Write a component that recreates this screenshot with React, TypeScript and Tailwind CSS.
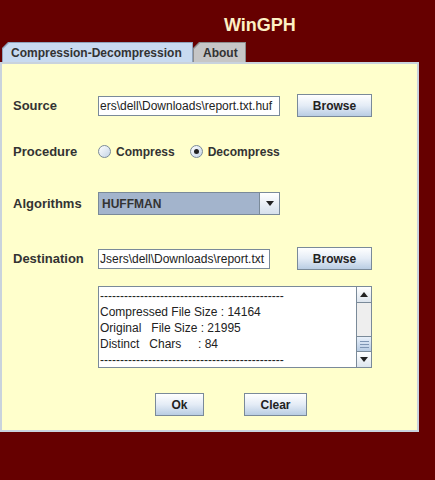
import React from 'react';

const FONT = "font-['Liberation_Sans',Arial,sans-serif]";

const MetalButton: React.FC<{ label: string; className?: string }> = ({ label, className = '' }) => (
    <button
        className={`h-[23px] border border-[#7a8a99] bg-gradient-to-b from-[#ffffff] via-[#e4ecf6] to-[#b9cde3] text-[12px] font-bold text-[#222] ${className}`}
    >
        {label}
    </button>
);

const Radio: React.FC<{ checked?: boolean; label: string }> = ({ checked, label }) => (
    <label className="flex items-center gap-[5px]">
        <span className="w-[13px] h-[13px] rounded-full border border-[#7a8a99] bg-gradient-to-br from-[#ffffff] to-[#c4d4e6] flex items-center justify-center">
            {checked && <span className="w-[5px] h-[5px] rounded-full bg-[#222]" />}
        </span>
        <span className="text-[12px] font-bold text-[#333] whitespace-nowrap">{label}</span>
    </label>
);

const Label: React.FC<{ children: React.ReactNode }> = ({ children }) => (
    <span className="w-[85px] text-[13px] font-bold text-[#333] whitespace-nowrap">{children}</span>
);

const Arrow: React.FC<{ up?: boolean }> = ({ up }) => (
    <svg width="8" height="5" viewBox="0 0 8 5">
        {up ? <polygon points="0,5 8,5 4,0" fill="#222" /> : <polygon points="0,0 8,0 4,5" fill="#222" />}
    </svg>
);

const DASHES = '----------------------------------------------';

export default function App() {
    return (
        <div className={`w-[435px] h-[480px] bg-[#660000] ${FONT} overflow-hidden`}>
            {/* Title */}
            <div className="h-[42px] pl-[224px] pt-[12px]">
                <span className="text-[18px] font-bold text-[#fdf0c4]">WinGPH</span>
            </div>

            {/* Tabs */}
            <div className="flex h-[20px] pl-[2px] items-end">
                <div className="w-[191px] h-[20px] bg-[#8ea2bb] [clip-path:polygon(6px_0,100%_0,100%_100%,0_100%,0_6px)] pt-[1px] pl-[1px] pr-[1px]">
                    <div className="h-full bg-[#c8daf0] [clip-path:polygon(6px_0,100%_0,100%_100%,0_100%,0_6px)] flex items-center pl-[8px] text-[12px] font-bold text-[#333] whitespace-nowrap">
                        Compression-Decompression
                    </div>
                </div>
                <div className="w-[53px] h-[20px] bg-[#8c8c8c] [clip-path:polygon(6px_0,100%_0,100%_100%,0_100%,0_6px)] pt-[1px] pl-[1px] pr-[1px]">
                    <div className="h-full bg-[#c6c6c6] [clip-path:polygon(6px_0,100%_0,100%_100%,0_100%,0_6px)] flex items-center pl-[9px] text-[12px] font-bold text-[#333]">
                        About
                    </div>
                </div>
            </div>

            {/* Panel */}
            <div className="w-[419px] h-[370px] bg-[#ffffcc] border-2 border-[#c9d3dd] flex flex-col">
                {/* Source */}
                <div className="flex items-center h-[23px] mt-[30px] pl-[11px]">
                    <Label>Source</Label>
                    <div className="w-[182px] h-[20px] bg-white border border-[#7a8a99] overflow-hidden whitespace-nowrap text-[12px] text-[#222] leading-[18px] pl-[1px]">
                        ers\dell\Downloads\report.txt.huf
                    </div>
                    <MetalButton label="Browse" className="w-[75px] ml-[17px]" />
                </div>

                {/* Procedure */}
                <div className="flex items-center h-[23px] mt-[23px] pl-[11px]">
                    <Label>Procedure</Label>
                    <div className="flex items-center gap-[15px]">
                        <Radio label="Compress" />
                        <Radio label="Decompress" checked />
                    </div>
                </div>

                {/* Algorithms */}
                <div className="flex items-center h-[23px] mt-[29px] pl-[11px]">
                    <Label>Algorithms</Label>
                    <div className="w-[182px] h-[23px] border border-[#7a8a99] flex">
                        <div className="flex-1 bg-[#a3b4cc] flex items-center pl-[3px] text-[12px] font-bold text-[#333]">HUFFMAN</div>
                        <div className="w-[20px] border-l border-[#7a8a99] bg-gradient-to-b from-[#ffffff] to-[#d6e0ec] flex items-center justify-center">
                            <Arrow />
                        </div>
                    </div>
                </div>

                {/* Destination */}
                <div className="flex items-center h-[23px] mt-[32px] pl-[11px]">
                    <Label>Destination</Label>
                    <div className="w-[172px] h-[20px] bg-white border border-[#7a8a99] overflow-hidden whitespace-nowrap text-[12px] text-[#222] leading-[18px] pl-[1px]">
                        Jsers\dell\Downloads\report.txt
                    </div>
                    <MetalButton label="Browse" className="w-[75px] ml-[27px]" />
                </div>

                {/* Output */}
                <div className="flex mt-[16px] pl-[96px]">
                    <div className="w-[274px] h-[82px] bg-white border border-[#7a8a99] flex">
                        <div className="flex-1 overflow-hidden whitespace-pre text-[12px] leading-[16px] text-[#222] pl-[1px]">
                            <div className="h-[17px] pt-[1px]">{DASHES}</div>
                            <div>Compressed File Size : 14164</div>
                            <div>Original   File Size : 21995</div>
                            <div>Distinct   Chars     : 84</div>
                            <div>{DASHES}</div>
                        </div>
                        <div className="w-[15px] border-l border-[#7a8a99] bg-[#eeeeee] flex flex-col">
                            <div className="h-[16px] border-b border-[#7a8a99] bg-gradient-to-b from-[#ffffff] to-[#dde5ee] flex items-center justify-center">
                                <Arrow up />
                            </div>
                            <div className="flex-1" />
                            <div className="h-[16px] border-y border-[#7a8a99] bg-gradient-to-b from-[#e8f0fa] to-[#b8cce4] flex flex-col items-center justify-center gap-[2px]">
                                <span className="w-[9px] h-px bg-[#7f96b4]" />
                                <span className="w-[9px] h-px bg-[#7f96b4]" />
                                <span className="w-[9px] h-px bg-[#7f96b4]" />
                            </div>
                            <div className="h-[15px] bg-gradient-to-b from-[#ffffff] to-[#dde5ee] flex items-center justify-center">
                                <Arrow />
                            </div>
                        </div>
                    </div>
                </div>

                {/* Actions */}
                <div className="flex mt-[25px] pl-[153px]">
                    <MetalButton label="Ok" className="w-[49px]" />
                    <MetalButton label="Clear" className="w-[63px] ml-[40px]" />
                </div>
            </div>
        </div>
    );
}
